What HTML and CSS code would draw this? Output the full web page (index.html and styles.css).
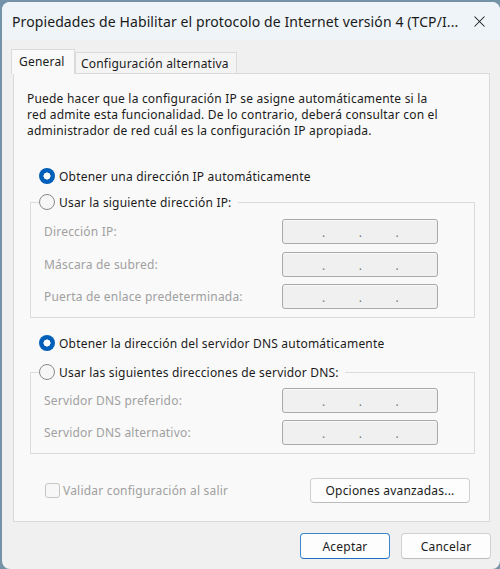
FILE: index.html
```html
<!DOCTYPE html>
<html lang="es">
<head>
<meta charset="utf-8">
<link rel="stylesheet" href="styles.css">
</head>
<body>
<div class="window">
  <div class="titlebar">
    <span class="title">Propiedades de Habilitar el protocolo de Internet versión 4 (TCP/I...</span>
    <span class="close"><svg width="11" height="11" viewBox="0 0 11 11"><path d="M0.5 0.5 L10.5 10.5 M10.5 0.5 L0.5 10.5" stroke="#1a1a1a" stroke-width="1.05" fill="none"/></svg></span>
  </div>
  <div class="main">
    <div class="tabs">
      <div class="tab active">General</div>
      <div class="tab">Configuración alternativa</div>
    </div>
    <div class="panel">
      <p class="desc">Puede hacer que la configuración IP se asigne automáticamente si la<br>red admite esta funcionalidad. De lo contrario, deberá consultar con el<br>administrador de red cuál es la configuración IP apropiada.</p>

      <div class="radio-row r1"><span class="radio on"></span><span>Obtener una dirección IP automáticamente</span></div>

      <fieldset class="group g1">
        <legend><span class="radio"></span><span>Usar la siguiente dirección IP:</span></legend>
        <div class="field"><span class="lbl">Dirección IP:</span><span class="ip"><i>.</i><i>.</i><i>.</i></span></div>
        <div class="field f2"><span class="lbl">Máscara de subred:</span><span class="ip"><i>.</i><i>.</i><i>.</i></span></div>
        <div class="field f3"><span class="lbl">Puerta de enlace predeterminada:</span><span class="ip"><i>.</i><i>.</i><i>.</i></span></div>
      </fieldset>

      <div class="radio-row r3"><span class="radio on"></span><span>Obtener la dirección del servidor DNS automáticamente</span></div>

      <fieldset class="group g2">
        <legend><span class="radio"></span><span>Usar las siguientes direcciones de servidor DNS:</span></legend>
        <div class="field"><span class="lbl">Servidor DNS preferido:</span><span class="ip"><i>.</i><i>.</i><i>.</i></span></div>
        <div class="field f3"><span class="lbl">Servidor DNS alternativo:</span><span class="ip"><i>.</i><i>.</i><i>.</i></span></div>
      </fieldset>

      <div class="panel-foot">
        <span class="check"><span class="box"></span><span>Validar configuración al salir</span></span>
        <button class="btn adv">Opciones avanzadas...</button>
      </div>
    </div>
    <div class="actions">
      <button class="btn primary">Aceptar</button>
      <button class="btn">Cancelar</button>
    </div>
  </div>
</div>
</body>
</html>
```
FILE: styles.css
```css
* { box-sizing: border-box; }
html, body { margin: 0; }
body {
  background: #7493a8;
  font-family: "Noto Sans", sans-serif;
  font-size: 12px;
  letter-spacing: 0.2px;
  color: #1b1b1b;
  width: 500px;
  height: 569px;
  overflow: hidden;
}
.window {
  margin: 2px 0 0 2px;
  width: 498px;
  height: 567px;
  border-radius: 8px;
  overflow: hidden;
  background: #f0f0f0;
  display: flex;
  flex-direction: column;
}
.titlebar {
  height: 38px;
  flex: none;
  background: #eef4f8;
  display: flex;
  align-items: center;
  padding-left: 10px;
}
.title {
  flex: 1;
  font-size: 14px;
  letter-spacing: 0.1px;
  white-space: nowrap;
  color: #1a1a1a;
}
.close {
  width: 40px;
  display: flex;
  justify-content: center;
  margin-right: 1px;
}
.main {
  padding: 9px 10px 0 11px;
}
.tabs {
  display: flex;
  align-items: flex-end;
  height: 24px;
}
.tab {
  height: 21px;
  line-height: 22px;
  border: 1px solid #dadada;
  border-bottom: 0;
  background: #f4f4f4;
  width: 162px;
  padding-left: 5px;
  white-space: nowrap;
}
.tab.active {
  position: relative;
  z-index: 1;
  height: 25px;
  line-height: 24px;
  margin-bottom: -1px;
  margin-left: -2px;
  width: 64px;
  padding-left: 7px;
  background: #f9f9f9;
}
.panel {
  height: 449px;
  border: 1px solid #dadada;
  background: #f9f9f9;
  padding: 17px 14px 0 16px;
}
.desc {
  margin: 0 0 0 -3px;
  line-height: 16px;
  white-space: nowrap;
}
.radio-row {
  display: flex;
  align-items: center;
  height: 16px;
  padding-left: 9px;
  gap: 4px;
  white-space: nowrap;
}
.r1 { margin-top: 29px; }
.r3 { margin-top: 17px; }
.radio {
  width: 16px;
  height: 16px;
  flex: none;
  border-radius: 50%;
  border: 1px solid #8a8a8a;
  background: #f6f6f6;
}
.radio.on {
  border: none;
  background: radial-gradient(circle, #ffffff 0 3.3px, #005fb8 3.8px);
}
.group {
  margin: 10px 0 0 0;
  border: 1px solid #dcdcdc;
  padding: 9px 0 8px 8px;
  min-width: 0;
}
.g2 { margin-top: 13px; padding-top: 8px; }
.group legend {
  display: flex;
  align-items: center;
  gap: 4px;
  height: 16px;
  padding: 0 6px 0 0;
  white-space: nowrap;
}
.field {
  display: flex;
  align-items: center;
  height: 25px;
  margin-left: 5px;
}
.f2 { margin-top: 8px; }
.f3 { margin-top: 7px; }
.lbl {
  flex: 1;
  color: #a0a0a0;
  white-space: nowrap;
}
.ip {
  width: 156px;
  height: 25px;
  margin-right: 36px;
  border: 1px solid #a9a9a9;
  border-radius: 3px;
  background: #f0f0f0;
  box-shadow: inset 0 1px 0 #f8f8f8;
  display: flex;
  justify-content: space-between;
  padding: 0 38px 0 39px;
  line-height: 25px;
  color: #7a7a7a;
}
.ip i { font-style: normal; }
.panel-foot {
  margin-top: 24px;
  display: flex;
  align-items: center;
  justify-content: space-between;
  padding: 0 5px 0 15px;
}
.check {
  display: flex;
  align-items: center;
  gap: 3px;
  color: #a0a0a0;
  white-space: nowrap;
}
.box {
  width: 15px;
  height: 15px;
  border: 1px solid #c6c6c6;
  border-radius: 3px;
  background: #f7f7f7;
}
.btn {
  font-family: "Noto Sans", sans-serif;
  font-size: 12px;
  letter-spacing: 0.2px;
  color: #1b1b1b;
  height: 25px;
  border: 1px solid #d0d0d0;
  border-bottom-color: #bdbdbd;
  border-radius: 4px;
  background: #fdfdfd;
  padding: 0;
}
.adv { width: 160px; }
.actions {
  margin-top: 11px;
  margin-right: -1px;
  display: flex;
  justify-content: flex-end;
  gap: 11px;
}
.actions .btn { width: 90px; height: 26px; }
.btn.primary {
  border-color: #3b86d1;
  border-bottom-color: #1e6fc0;
}
```
